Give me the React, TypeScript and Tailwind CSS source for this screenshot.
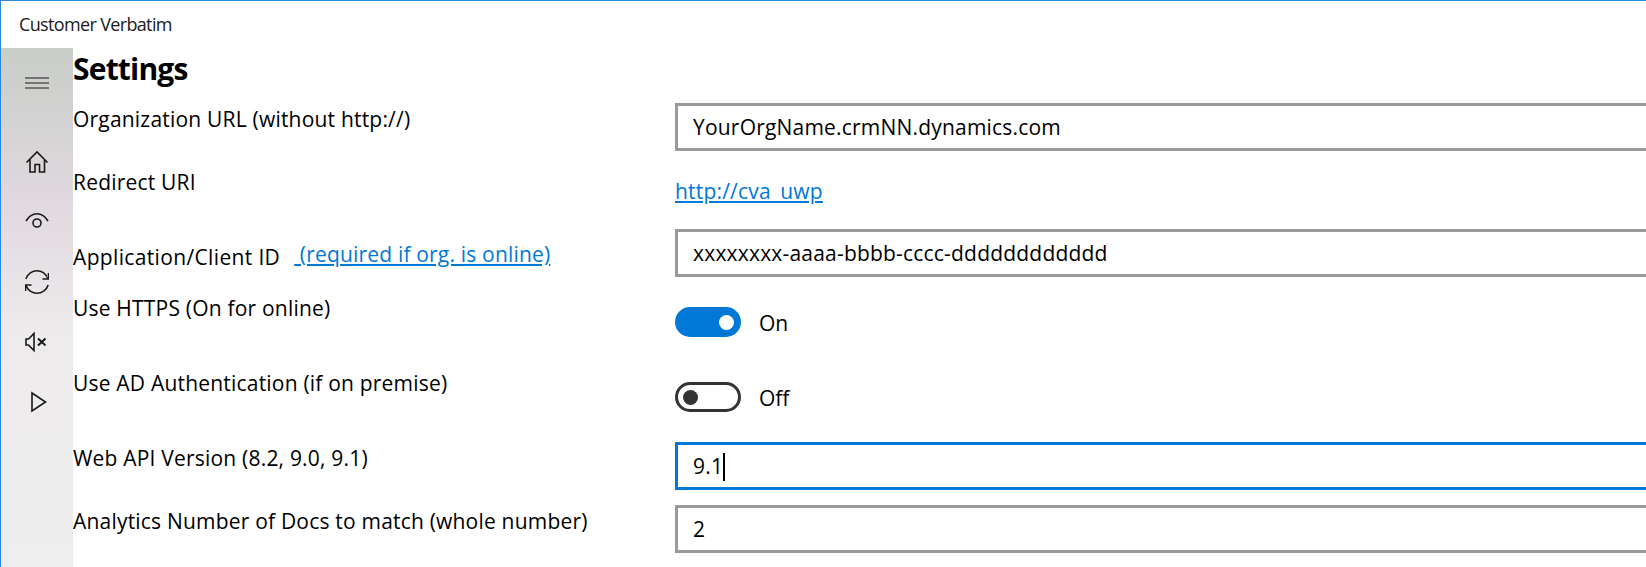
const font = { fontFamily: '"Open Sans", "Noto Sans", sans-serif' };

function Icon({ children, box = 24 }: { children: React.ReactNode; box?: number }) {
  return (
    <svg width={box} height={box} viewBox={`0 0 ${box} ${box}`} fill="none" stroke="#1a1a1a" strokeWidth="1.6">
      {children}
    </svg>
  );
}

const navIcons = [
  // home
  <Icon key="home">
    <path d="M1.5 12.5 L12 2 L22.5 12.5 M5 9.5 V22 H10 V14.5 H14.5 V22 H19.5 V9.5" />
  </Icon>,
  // eye
  <Icon key="eye">
    <path d="M1 11 C4 6 8 3.8 12 3.8 C16 3.8 20 6 23 11" />
    <circle cx="12" cy="13" r="4" />
  </Icon>,
  // sync
  <Icon key="sync">
    <path d="M0.8 9 C2.5 3.5 7.5 0.8 12 0.8 C17 0.8 20.5 3.5 23 8.2 M23.5 3 V9 H17.5" />
    <path d="M23.2 15 C21.5 20.5 16.5 23.2 12 23.2 C7 23.2 3.5 20.5 1 15.8 M0.5 21 V15 H6.5" />
  </Icon>,
  // mute
  <Icon key="mute">
    <path d="M1 9 H3.5 L9 3.5 V20.5 L3.5 15 H1 Z" />
    <path d="M13 8.5 L20.5 15.5 M20.5 8.5 L13 15.5" strokeWidth="2" />
  </Icon>,
  // play
  <Icon key="play">
    <path d="M7 3 L20.5 12 L7 21 Z" />
  </Icon>,
];

function Toggle({ on }: { on: boolean }) {
  return (
    <div className="flex items-center gap-[18px]">
      {on ? (
        <div className="w-[66px] h-[30px] rounded-full bg-[#0078d7] flex items-center justify-end pr-[7px]">
          <div className="w-[15px] h-[15px] rounded-full bg-white" />
        </div>
      ) : (
        <div className="w-[66px] h-[30px] rounded-full border-[3px] border-[#333333] bg-white flex items-center pl-[5px]">
          <div className="w-[15px] h-[15px] rounded-full bg-[#333333]" />
        </div>
      )}
      <span className="text-[21px] leading-[28px] pt-[1px] text-black">{on ? "On" : "Off"}</span>
    </div>
  );
}

function Field({ value, focused }: { value: string; focused?: boolean }) {
  return (
    <div
      className={`h-[48px] w-[1000px] border-[3px] flex items-center pl-[15px] pt-[1px] text-[21px] text-black tracking-[0.2px] ${
        focused ? "border-[#0078d7]" : "border-[#999999]"
      }`}
    >
      {value}
      {focused && <span className="w-[2px] h-[28px] bg-black" />}
    </div>
  );
}

function Row({
  label,
  height,
  labelTop,
  controlTop = "",
  children,
}: {
  label: React.ReactNode;
  height: number;
  labelTop: string;
  controlTop?: string;
  children: React.ReactNode;
}) {
  return (
    <div className="flex" style={{ height }}>
      <div className={`w-[602px] shrink-0 text-[21px] leading-[28px] text-black tracking-[0.2px] whitespace-nowrap ${labelTop}`}>
        {label}
      </div>
      <div className={controlTop}>{children}</div>
    </div>
  );
}

export default function App() {
  return (
    <div style={font} className="h-[567px] w-[1646px] overflow-hidden bg-white border-t border-l border-[#2b88d8] flex flex-col">
      <div className="h-[47px] shrink-0 pl-[18px] pt-[11px] text-[18px] leading-[24px] text-[#1a1a1a] tracking-[-0.65px]">
        Customer Verbatim
      </div>
      <div className="flex flex-1 min-h-0">
        <div className="w-[72px] shrink-0 flex flex-col items-center bg-[linear-gradient(180deg,#c9cdc8_0%,#e0d9df_30%,#eeebec_55%,#eeeeee_100%)]">
          <div className="mt-[5px] mb-[19px] h-[60px] flex items-center">
            <Icon>
              <path d="M0 7 H24 M0 12 H24 M0 17 H24" strokeWidth="1" />
            </Icon>
          </div>
          {navIcons.map((ic, i) => (
            <div key={i} className="h-[60px] flex items-center">
              {ic}
            </div>
          ))}
        </div>
        <div className="flex-1 min-w-0">
          <div className="h-[55px] text-[30px] leading-[40px] font-bold text-black pt-[1px] tracking-[-0.8px]">Settings</div>
          <Row label="Organization URL (without http://)" height={63} labelTop="pt-[2px]">
            <Field value="YourOrgName.crmNN.dynamics.com" />
          </Row>
          <Row label="Redirect URI" height={63} labelTop="pt-[2px]" controlTop="pt-[11px]">
            <a className="text-[21px] leading-[28px] text-[#0078d7] underline tracking-[0.2px]">http://cva_uwp</a>
          </Row>
          <Row
            label={
              <span>
                <span className="tracking-[0.35px]">Application/Client ID</span>
                <a className="relative -top-[3px] ml-[14px] text-[#0078d7] underline tracking-[0.18px]">&nbsp;(required if org. is online)</a>
              </span>
            }
            height={65}
            labelTop="pt-[14px]"
          >
            <Field value="xxxxxxxx-aaaa-bbbb-cccc-dddddddddddd" />
          </Row>
          <Row label="Use HTTPS (On for online)" height={75} labelTop="" controlTop="pt-[13px]">
            <Toggle on />
          </Row>
          <Row label="Use AD Authentication (if on premise)" height={73} labelTop="" controlTop="pt-[13px]">
            <Toggle on={false} />
          </Row>
          <Row label="Web API Version (8.2, 9.0, 9.1)" height={63} labelTop="pt-[2px]">
            <Field value="9.1" focused />
          </Row>
          <Row label="Analytics Number of Docs to match (whole number)" height={62} labelTop="pt-[2px]">
            <Field value="2" />
          </Row>
        </div>
      </div>
    </div>
  );
}
